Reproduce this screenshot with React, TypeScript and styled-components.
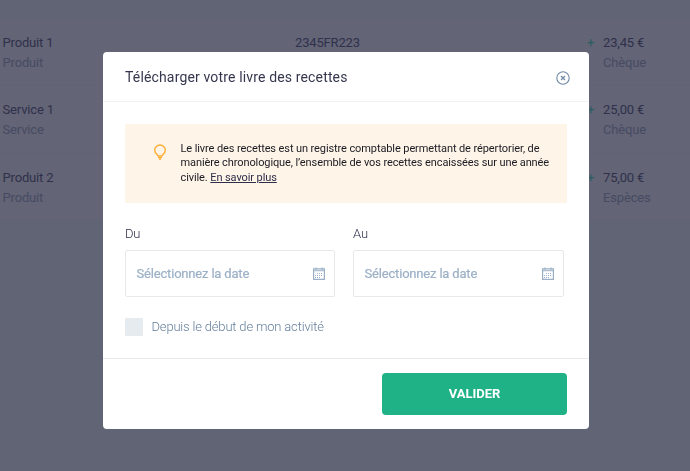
import React from "react";
import styled, { createGlobalStyle } from "styled-components";

const GlobalStyle = createGlobalStyle`
  *, *::before, *::after { box-sizing: border-box; }
  body {
    margin: 0;
    overflow: hidden;
    background: #616475;
    font-family: Roboto, "Liberation Sans", sans-serif;
  }
  button, input { font-family: inherit; }
`;

const Page = styled.main`
  height: 471px;
  padding-top: 19px;
  background: #616475;
`;

const Row = styled.div<{ $height: number }>`
  display: grid;
  grid-template-columns: 292.5px 292px 1fr;
  height: ${(p) => p.$height}px;
  padding: 14px 0 0 2.5px;
  background: #636475;
  border-bottom: 1px solid #606374;
  font-size: 13px;
  line-height: 20px;
  letter-spacing: -0.16px;
`;

const Primary = styled.div`
  color: #2f314c;
`;

const Secondary = styled.div`
  color: #464b63;
`;

const Amount = styled.div`
  display: grid;
  grid-template-columns: 16px 1fr;
`;

const Plus = styled.span`
  color: #2b5c64;
`;

const Overlay = styled.div`
  position: fixed;
  inset: 0;
  padding: 52px 101px 42px 103px;
`;

const Dialog = styled.section`
  display: flex;
  flex-direction: column;
  height: 377px;
  background: #fff;
  border-radius: 4px;
  overflow: hidden;
`;

const Header = styled.header`
  display: flex;
  align-items: center;
  justify-content: space-between;
  height: 50px;
  padding: 1px 19px 0 22px;
  border-bottom: 1px solid #f0f1f3;
`;

const Title = styled.h1`
  margin: 0;
  font-size: 14px;
  font-weight: 400;
  line-height: 20px;
  letter-spacing: 0.15px;
  color: #35374f;
`;

const CloseButton = styled.button`
  display: flex;
  padding: 0;
  margin-top: 1px;
  border: 0;
  background: none;
  color: #6e88a5;
`;

const Body = styled.div`
  flex: 1;
  padding: 22px 22px 0;
`;

const Notice = styled.div`
  display: flex;
  height: 79px;
  padding: 17px 0 0 28px;
  background: #fff4e8;
  border-radius: 1px;
`;

const BulbIcon = styled.svg`
  flex: none;
  margin: 3px 13.5px 0 0;
`;

const NoticeText = styled.p`
  margin: 0;
  padding-top: 0.5px;
  font-size: 11px;
  line-height: 14.5px;
  letter-spacing: -0.1px;
  color: #1b1b22;
  white-space: nowrap;
`;

const Link = styled.a`
  color: #2c2e4a;
  text-decoration: underline;
  text-underline-offset: 1px;
`;

const Fields = styled.div`
  display: grid;
  grid-template-columns: 210px 211px;
  column-gap: 18px;
  margin-top: 21px;
`;

const Label = styled.label`
  display: block;
  height: 26px;
  font-size: 13px;
  font-weight: 300;
  line-height: 20px;
  letter-spacing: -0.15px;
  color: #2c2e4a;
`;

const DateInput = styled.div`
  display: flex;
  align-items: center;
  justify-content: space-between;
  height: 47px;
  padding: 0 9px 0 10.5px;
  border: 1px solid #e6e8ea;
  border-radius: 2px;
  font-size: 13px;
  letter-spacing: -0.18px;
  color: #9bb0c6;
`;

const Placeholder = styled.span`
  -webkit-text-stroke: 0.2px currentColor;
`;

const CheckRow = styled.label`
  display: flex;
  align-items: center;
  gap: 8.5px;
  margin-top: 21px;
  height: 18px;
  font-size: 13px;
  font-weight: 300;
  line-height: 16px;
  letter-spacing: -0.18px;
  color: #657f9c;
`;

const CheckBox = styled.span`
  width: 18px;
  height: 18px;
  border-radius: 1px;
  background: #e6ebef;
`;

const Footer = styled.footer`
  display: flex;
  justify-content: flex-end;
  height: 71px;
  padding: 14px 22px 0 0;
  border-top: 1px solid #e9eaec;
`;

const SubmitButton = styled.button`
  width: 185px;
  height: 42px;
  padding: 0 0 2px;
  border: 0;
  border-radius: 4px;
  background: #1fb287;
  color: #fff;
  font-size: 13px;
  font-weight: 700;
`;

const entries = [
  { name: "Produit 1", kind: "Produit", ref: "2345FR223", amount: "23,45 €", method: "Chèque", height: 67 },
  { name: "Service 1", kind: "Service", ref: "", amount: "25,00 €", method: "Chèque", height: 68 },
  { name: "Produit 2", kind: "Produit", ref: "", amount: "75,00 €", method: "Espèces", height: 67 },
];

const Calendar = () => (
  <svg width="12" height="13" viewBox="0 0 12 13" fill="none" stroke="currentColor">
    <path d="M.6 1.8h10.8v10.5H.6z" strokeWidth="1.2" />
    <path d="M.5 3.7h11" />
    <path d="M3 .5v2.3M9 .5v2.3" strokeWidth="1.2" />
    <path
      d="M4 6.5h1M6 6.5h1M8 6.5h1M2 8.5h1M4 8.5h1M6 8.5h1M8 8.5h1M2 10.5h1M4 10.5h1M6 10.5h1"
      strokeWidth="1"
    />
  </svg>
);

const DateField = ({ label }: { label: string }) => (
  <div>
    <Label>{label}</Label>
    <DateInput>
      <Placeholder>Sélectionnez la date</Placeholder>
      <Calendar />
    </DateInput>
  </div>
);

export default function App() {
  return (
    <>
      <GlobalStyle />
      <Page>
        {entries.map((e) => (
          <Row key={e.name} $height={e.height}>
            <div>
              <Primary>{e.name}</Primary>
              <Secondary>{e.kind}</Secondary>
            </div>
            <Primary>{e.ref}</Primary>
            <Amount>
              <Plus>+</Plus>
              <div>
                <Primary>{e.amount}</Primary>
                <Secondary>{e.method}</Secondary>
              </div>
            </Amount>
          </Row>
        ))}
      </Page>
      <Overlay>
        <Dialog role="dialog" aria-modal="true">
          <Header>
            <Title>Télécharger votre livre des recettes</Title>
            <CloseButton aria-label="Fermer">
              <svg width="14" height="14" viewBox="0 0 14 14" fill="none" stroke="currentColor">
                <circle cx="7" cy="7" r="6.2" strokeWidth="1.1" />
                <path d="M5 5l4 4M9 5L5 9" strokeWidth="1.2" />
              </svg>
            </CloseButton>
          </Header>
          <Body>
            <Notice>
              <BulbIcon width="14" height="17" viewBox="0 0 14 17" fill="none" stroke="#ffad32" strokeWidth="1.4">
                <path d="M5 11.9c0-1.1-3.3-2.3-3.3-5.6a5.3 5.3 0 0 1 10.6 0c0 3.3-3.3 4.5-3.3 5.6z" />
                <path d="M5 13.3h4M5.8 15h2.4" strokeWidth="1.6" />
              </BulbIcon>
              <NoticeText>
                Le livre des recettes est un registre comptable permettant de répertorier, de
                <br />
                manière chronologique, l’ensemble de vos recettes encaissées sur une année
                <br />
                civile. <Link>En savoir plus</Link>
              </NoticeText>
            </Notice>
            <Fields>
              <DateField label="Du" />
              <DateField label="Au" />
            </Fields>
            <CheckRow>
              <CheckBox />
              <span>Depuis le début de mon activité</span>
            </CheckRow>
          </Body>
          <Footer>
            <SubmitButton>VALIDER</SubmitButton>
          </Footer>
        </Dialog>
      </Overlay>
    </>
  );
}
